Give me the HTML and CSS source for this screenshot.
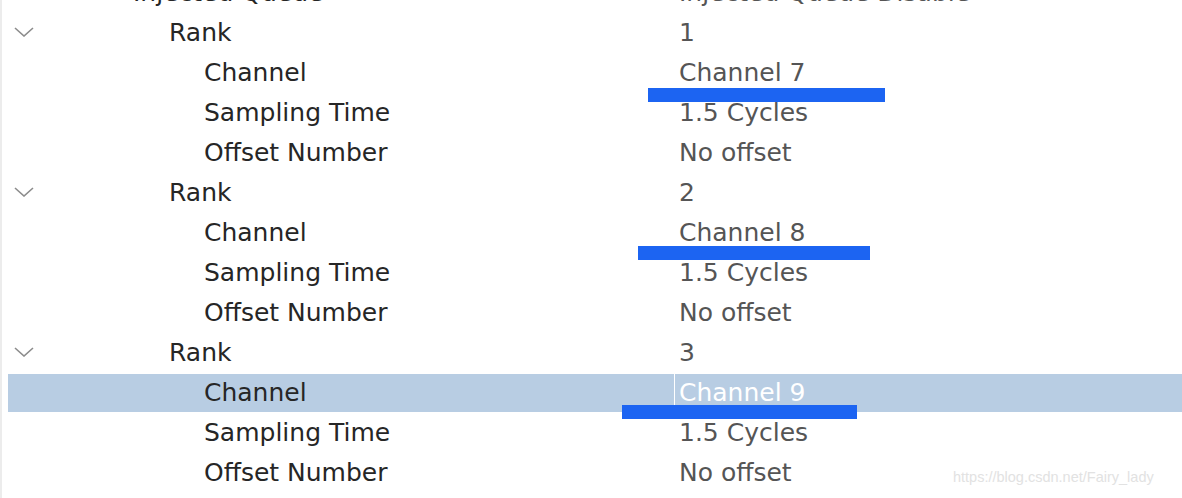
FILE: index.html
```html
<!DOCTYPE html>
<html lang="en">
<head>
<meta charset="utf-8">
<title>Injected Queue</title>
<link rel="stylesheet" href="styles.css">
</head>
<body>
<div class="page">
  <div class="strip"></div>
  <div class="tree">
    <div class="rows">
      <div class="row"><div class="label"><span class="toggle"></span><span class="text l0">Injected Queue</span></div><div class="value">Injected Queue Disable</div></div>

      <div class="row"><div class="label"><svg class="toggle" viewBox="0 0 20 10"><polyline points="1,1 10,9 19,1"/></svg><span class="text l1">Rank</span></div><div class="value">1</div></div>
      <div class="row"><div class="label"><span class="toggle"></span><span class="text l2">Channel</span></div><div class="value">Channel 7</div></div>
      <div class="row"><div class="label"><span class="toggle"></span><span class="text l2">Sampling Time</span></div><div class="value">1.5 Cycles</div></div>
      <div class="row"><div class="label"><span class="toggle"></span><span class="text l2">Offset Number</span></div><div class="value">No offset</div></div>

      <div class="row"><div class="label"><svg class="toggle" viewBox="0 0 20 10"><polyline points="1,1 10,9 19,1"/></svg><span class="text l1">Rank</span></div><div class="value">2</div></div>
      <div class="row"><div class="label"><span class="toggle"></span><span class="text l2">Channel</span></div><div class="value">Channel 8</div></div>
      <div class="row"><div class="label"><span class="toggle"></span><span class="text l2">Sampling Time</span></div><div class="value">1.5 Cycles</div></div>
      <div class="row"><div class="label"><span class="toggle"></span><span class="text l2">Offset Number</span></div><div class="value">No offset</div></div>

      <div class="row"><div class="label"><svg class="toggle" viewBox="0 0 20 10"><polyline points="1,1 10,9 19,1"/></svg><span class="text l1">Rank</span></div><div class="value">3</div></div>
      <div class="row selected"><div class="label"><span class="toggle"></span><span class="text l2">Channel</span></div><div class="value">Channel 9</div></div>
      <div class="row"><div class="label"><span class="toggle"></span><span class="text l2">Sampling Time</span></div><div class="value">1.5 Cycles</div></div>
      <div class="row"><div class="label"><span class="toggle"></span><span class="text l2">Offset Number</span></div><div class="value">No offset</div></div>
    </div>

    <div class="mark mark-1"></div>
    <div class="mark mark-2"></div>
    <div class="mark mark-3"></div>
    <div class="watermark">https://blog.csdn.net/Fairy_lady</div>
  </div>
</div>
</body>
</html>
```

FILE: styles.css
```css
html, body {
  margin: 0;
  padding: 0;
  background: #ffffff;
}

.page {
  display: flex;
  width: 1182px;
  height: 498px;
  overflow: hidden;
}

.strip {
  flex: none;
  width: 2px;
  background: #ececec;
}

.tree {
  position: relative;
  flex: 1;
  overflow: hidden;
}

.rows {
  display: flex;
  flex-direction: column;
  gap: 2px;
  margin-top: -26px;
  padding-left: 6px;
}

.row {
  display: flex;
  flex: none;
  height: 38px;
  font-family: "DejaVu Sans", "Liberation Sans", sans-serif;
  font-size: 25px;
  line-height: 38px;
}

.label {
  flex: none;
  width: 666px;
  display: flex;
  align-items: center;
  padding-left: 6px;
  box-sizing: border-box;
  color: #262626;
  white-space: nowrap;
}

.toggle {
  flex: none;
  width: 20px;
  height: 10px;
  margin-top: -2px;
}

.toggle polyline {
  fill: none;
  stroke: #8c8c8c;
  stroke-width: 1.6;
}

.text.l0 { margin-left: 99px; }
.text.l1 { margin-left: 135px; }
.text.l2 { margin-left: 170px; }

.value {
  flex: 1;
  border-left: 1px solid transparent;
  padding-left: 4px;
  color: #555555;
  white-space: nowrap;
}

.row.selected {
  background: #b8cde3;
}

.row.selected .value {
  border-left-color: #ffffff;
  color: #ffffff;
}

.mark {
  position: absolute;
  height: 14px;
  background: #1c64f2;
}

.mark-1 { left: 646px; top: 88px; width: 237px; }
.mark-2 { left: 636px; top: 246px; width: 232px; }
.mark-3 { left: 620px; top: 405px; width: 235px; }

.watermark {
  position: absolute;
  left: 951px;
  top: 469px;
  font-family: "Liberation Sans", Arial, sans-serif;
  font-size: 14.5px;
  color: #e2e2e2;
  white-space: nowrap;
}
```
